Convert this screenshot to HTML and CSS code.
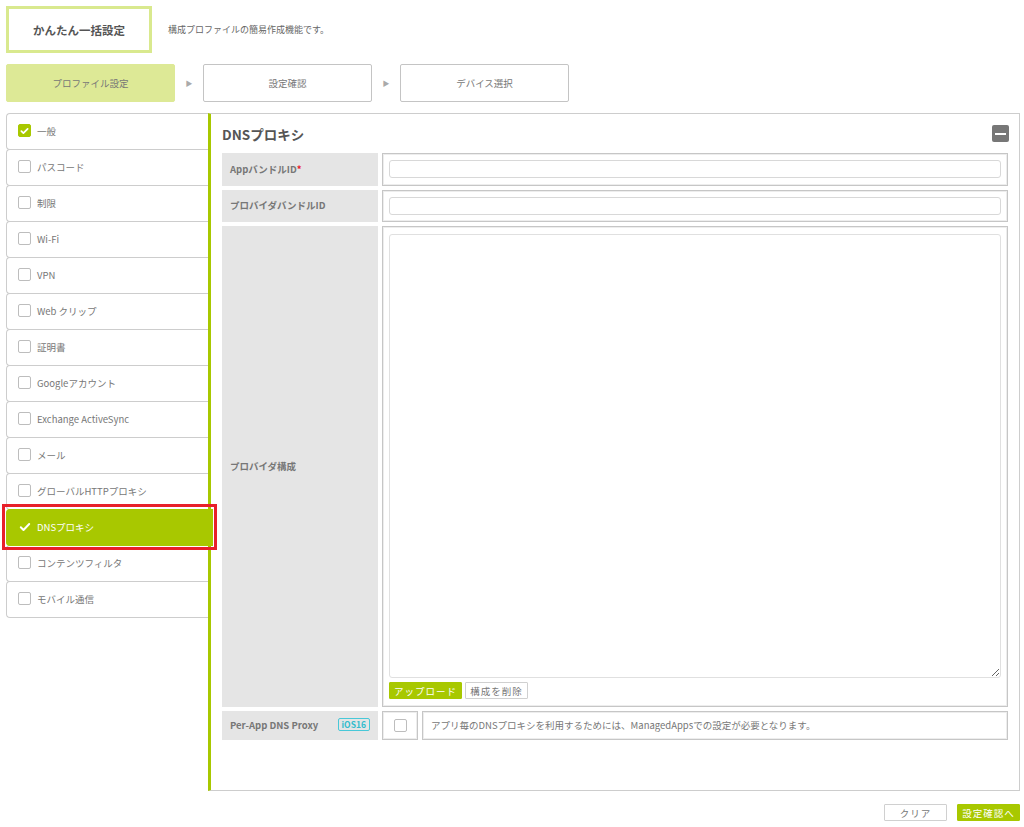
FILE: index.html
```html
<!DOCTYPE html>
<html lang="ja">
<head>
<meta charset="utf-8">
<title>かんたん一括設定</title>
<link rel="stylesheet" href="styles.css">
</head>
<body>
<div class="page">
  <header class="head">
    <div class="head-title">かんたん一括設定</div>
    <p class="head-desc">構成プロファイルの簡易作成機能です。</p>
  </header>

  <nav class="steps">
    <div class="step step-current">プロファイル設定</div>
    <div class="step-arrow">&#9654;</div>
    <div class="step">設定確認</div>
    <div class="step-arrow">&#9654;</div>
    <div class="step">デバイス選択</div>
  </nav>

  <div class="main">
    <ul class="side">
      <li class="side-item is-checked"><span class="cb cb-on"><svg viewBox="0 0 14 14" width="14" height="14"><path d="M3 7.2l2.6 2.6L11 4.2" fill="none" stroke="#fff" stroke-width="2.2" stroke-linecap="round" stroke-linejoin="round"/></svg></span>一般</li>
      <li class="side-item"><span class="cb"></span>パスコード</li>
      <li class="side-item"><span class="cb"></span>制限</li>
      <li class="side-item"><span class="cb"></span>Wi-Fi</li>
      <li class="side-item"><span class="cb"></span>VPN</li>
      <li class="side-item"><span class="cb"></span>Web クリップ</li>
      <li class="side-item"><span class="cb"></span>証明書</li>
      <li class="side-item"><span class="cb"></span>Googleアカウント</li>
      <li class="side-item"><span class="cb"></span>Exchange ActiveSync</li>
      <li class="side-item"><span class="cb"></span>メール</li>
      <li class="side-item"><span class="cb"></span>グローバルHTTPプロキシ</li>
      <li class="side-item is-active"><span class="tick"><svg viewBox="0 0 12 12" width="12" height="12"><path d="M1.8 6.3l2.7 2.7L10.2 3" fill="none" stroke="#fff" stroke-width="2" stroke-linecap="round" stroke-linejoin="round"/></svg></span>DNSプロキシ<span class="mark"></span></li>
      <li class="side-item"><span class="cb"></span>コンテンツフィルタ</li>
      <li class="side-item"><span class="cb"></span>モバイル通信</li>
    </ul>

    <section class="panel">
      <div class="panel-head">
        <h2 class="panel-title">DNSプロキシ</h2>
        <button class="collapse" type="button" aria-label="折りたたむ"><span></span></button>
      </div>

      <div class="form">
        <div class="lbl">AppバンドルID<span class="req">*</span></div>
        <div class="val val-1"><input class="txt" type="text"></div>

        <div class="lbl">プロバイダバンドルID</div>
        <div class="val val-2"><input class="txt" type="text"></div>

        <div class="lbl">プロバイダ構成</div>
        <div class="val val-3">
          <textarea class="area"></textarea>
          <div class="area-btns">
            <button class="btn btn-green" type="button">アップロード</button>
            <button class="btn btn-plain" type="button">構成を削除</button>
          </div>
        </div>

        <div class="lbl lbl-badge">Per-App DNS Proxy<span class="badge">iOS16</span></div>
        <div class="val-split">
          <div class="val val-cb"><span class="cb"></span></div>
          <div class="val val-note">アプリ毎のDNSプロキシを利用するためには、ManagedAppsでの設定が必要となります。</div>
        </div>
      </div>
    </section>
  </div>

  <footer class="foot">
    <button class="fbtn fbtn-plain" type="button">クリア</button>
    <button class="fbtn fbtn-green" type="button">設定確認へ</button>
  </footer>
</div>
</body>
</html>
```

FILE: styles.css
```css
* { box-sizing: border-box; }

html, body {
  margin: 0;
  padding: 0;
  background: #fff;
}

body {
  font-family: "Noto Sans CJK JP", "Noto Sans", sans-serif;
  color: #777;
  font-size: 9.5px;
}

.page {
  padding: 6px 4px 0 6px;
  width: 1024px;
}

/* header */
.head {
  display: flex;
  align-items: center;
  height: 47px;
}

.head-title {
  width: 146px;
  height: 47px;
  border: 3px solid #d9e98e;
  display: flex;
  align-items: center;
  justify-content: center;
  font-size: 11.5px;
  font-weight: bold;
  color: #555;
}

.head-desc {
  margin: 0 0 0 16px;
  font-size: 9px;
  color: #666;
}

/* steps */
.steps {
  display: flex;
  margin-top: 11px;
  height: 38px;
}

.step {
  width: 169px;
  height: 38px;
  border: 1px solid #c4c4c4;
  border-radius: 2px;
  display: flex;
  align-items: center;
  justify-content: center;
  color: #777;
  font-size: 9.5px;
}

.step-current {
  background: #dde996;
  border-color: #dde996;
}

.step-arrow {
  width: 28px;
  display: flex;
  align-items: center;
  justify-content: center;
  font-size: 7px;
  color: #aaa;
}

/* main */
.main {
  display: flex;
  margin-top: 11px;
}

.side {
  list-style: none;
  margin: 0;
  padding: 0;
  width: 202px;
  flex: none;
}

.side-item {
  position: relative;
  height: 37px;
  margin-top: -1px;
  border: 1px solid #cdcdcd;
  border-right: none;
  border-radius: 4px 0 0 4px;
  display: flex;
  align-items: center;
  padding-left: 11px;
  padding-bottom: 2px;
  color: #777;
  font-size: 9.5px;
  background: #fff;
}

.side-item:first-child { margin-top: 0; }

.cb {
  width: 13px;
  height: 13px;
  border: 1px solid #bdbdbd;
  border-radius: 2px;
  margin-right: 6px;
  flex: none;
  display: inline-flex;
  align-items: center;
  justify-content: center;
  background: #fff;
}

.cb-on {
  background: #a8c800;
  border-color: #a8c800;
}

.cb-on svg { display: block; }

.is-active {
  background: #a8c800;
  border-color: #a8c800;
  color: #fff;
  margin-right: -5px;
  z-index: 2;
}

.tick {
  width: 13px;
  height: 13px;
  margin-right: 6px;
  display: inline-flex;
  align-items: center;
  justify-content: center;
}

.tick svg { display: block; }

.mark {
  position: absolute;
  top: -6px;
  left: -5px;
  right: -4px;
  bottom: -5px;
  border: 3px solid #e8202a;
  pointer-events: none;
}

/* panel */
.panel {
  flex: 1;
  height: 678px;
  border: 1px solid #cdcdcd;
  border-left: 3px solid #a8c800;
  padding: 0 11px 0 11px;
  position: relative;
  z-index: 1;
}

.panel-head {
  height: 39px;
  display: flex;
  align-items: center;
  justify-content: space-between;
}

.panel-title {
  margin: 0;
  font-size: 13.5px;
  font-weight: bold;
  color: #555;
}

.collapse {
  width: 17px;
  height: 17px;
  border: none;
  border-radius: 2px;
  background: #777;
  padding: 0;
  margin-right: -1px;
  display: flex;
  align-items: center;
  justify-content: center;
}

.collapse span {
  display: block;
  width: 11px;
  height: 2px;
  background: #fff;
}

.form {
  display: grid;
  grid-template-columns: 156px 1fr;
  gap: 4px;
}

.lbl {
  background: #e5e5e5;
  display: flex;
  align-items: center;
  padding-left: 8px;
  padding-bottom: 2px;
  font-weight: bold;
  color: #777;
  font-size: 9.5px;
}

.req { color: #e8202a; }

.lbl-badge {
  justify-content: space-between;
  padding-right: 8px;
}

.badge {
  border: 1px solid #48c8d8;
  border-radius: 2px;
  color: #33bccd;
  font-size: 8.5px;
  font-weight: bold;
  padding: 0 3px;
  line-height: 11px;
  height: 13px;
}

.val {
  border: 1px solid #c6c6c6;
  box-shadow: inset 0 0 0 1px #ededed;
  padding: 6px 6px 0 6px;
  background: #fff;
}

.val-1 { height: 33px; }
.val-2 { height: 32px; }
.val-3 { height: 481px; padding-top: 7px; }

.txt {
  display: block;
  width: 100%;
  height: 18px;
  border: 1px solid #d8d8d8;
  border-radius: 3px;
  outline: none;
  background: #fff;
}

.area {
  display: block;
  width: 100%;
  height: 444px;
  border: 1px solid #e0e0e0;
  border-radius: 3px;
  resize: vertical;
  outline: none;
  margin: 0;
}

.area-btns {
  display: flex;
  gap: 3px;
  margin-top: 4px;
}

.btn {
  height: 17px;
  padding: 0;
  font-family: inherit;
  font-size: 9.5px;
  letter-spacing: 1px;
  border-radius: 1px;
}

.btn-green {
  width: 73px;
  background: #a8c800;
  border: 1px solid #a8c800;
  color: #fff;
}

.btn-plain {
  width: 63px;
  background: #fff;
  border: 1px solid #d0d0d0;
  color: #777;
}

.val-split {
  display: flex;
  gap: 4px;
  height: 29px;
}

.val-cb {
  width: 36px;
  padding: 0;
  display: flex;
  align-items: center;
  justify-content: center;
}

.val-cb .cb { margin: 0; }

.val-note {
  flex: 1;
  padding: 0 0 2px 8px;
  display: flex;
  align-items: center;
  color: #777;
}

/* footer */
.foot {
  display: flex;
  justify-content: flex-end;
  gap: 10px;
  margin-top: 13px;
}

.fbtn {
  width: 63px;
  height: 17px;
  padding: 0;
  font-family: inherit;
  font-size: 9.5px;
  letter-spacing: 1px;
  border-radius: 1px;
}

.fbtn-plain {
  background: #fff;
  border: 1px solid #d0d0d0;
  color: #777;
}

.fbtn-green {
  background: #a8c800;
  border: 1px solid #a8c800;
  color: #fff;
}
```
